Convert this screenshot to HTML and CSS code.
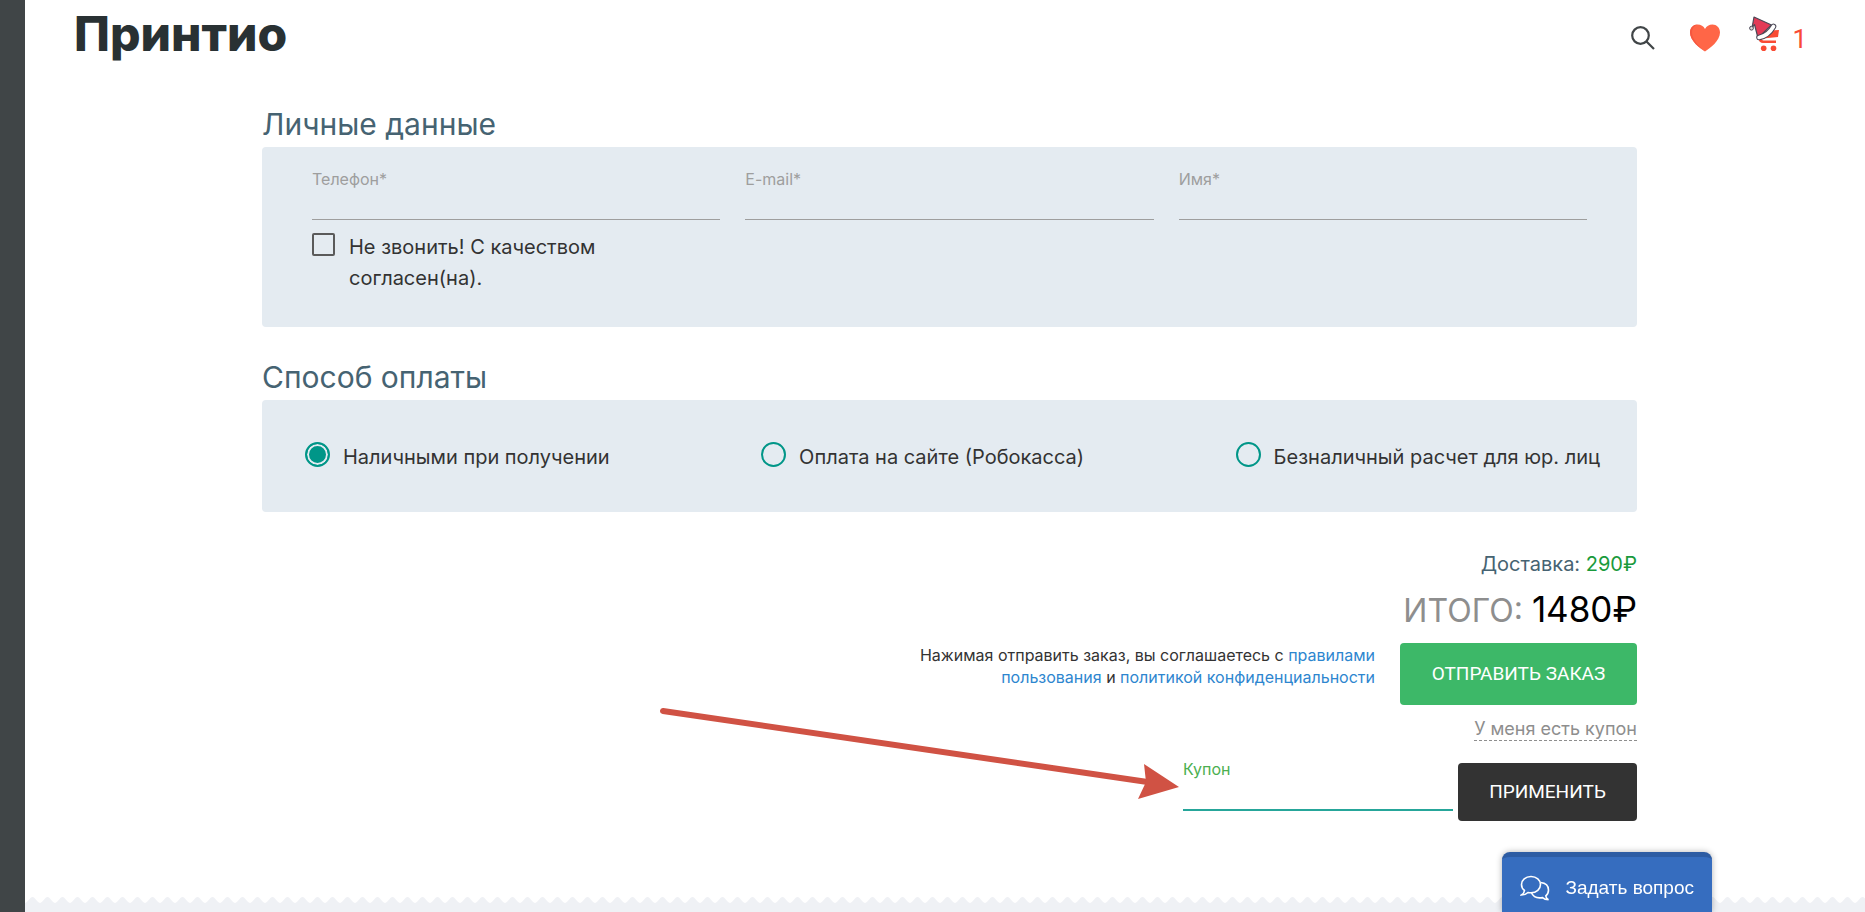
FILE: index.html
```html
<!DOCTYPE html>
<html lang="ru">
<head>
<meta charset="utf-8">
<title>Принтио — оформление заказа</title>
<link rel="stylesheet" href="styles.css">
</head>
<body>
<aside class="rail"></aside>
<div class="page">
  <header class="header">
    <a class="logo" href="#">Принтио</a>
    <nav class="tools">
      <a class="tool" href="#" aria-label="Поиск">
        <svg class="icon-search" viewBox="0 0 24 24"><circle cx="9.5" cy="9.5" r="8.3"/><path d="M15.5 15.5L23 23"/></svg>
      </a>
      <a class="tool" href="#" aria-label="Избранное">
        <svg class="icon-heart" viewBox="0 0 30 28"><path fill="#ff6647" d="M15 27.500C10 24 0 17 0 8.500C0 3.500 3.500 .5 7.500 .5C11 .5 13.500 2 15 5C16.500 2 19 .5 22.500 .5C26.500 .5 30 3.500 30 8.500C30 17 20 24 15 27.500Z"/><path fill="#f55840" d="M15 27.500C10 24 0 17 0 8.500C0 3.500 3.500 .5 7.500 .5C4 2 2 4.500 2 8.500C2 16 10 23 15 27.500Z"/></svg>
      </a>
      <a class="tool cart" href="#" aria-label="Корзина">
        <svg class="icon-cart" viewBox="0 0 31 36"><path fill="#f94b34" d="M12 15L30 14L29 21L14 22.500C12.500 23 13 24.500 14.500 24.500H27V27H14C9 26.500 9 22 12 21Z"/><circle cx="14.700" cy="32.200" r="2.800" fill="#f94b34"/><circle cx="24.500" cy="32.200" r="2.800" fill="#f94b34"/><path fill="#e33b57" stroke="#4a4856" stroke-width="1.200" stroke-linejoin="round" d="M5 1L22.500 9L9 22L5.500 8.500L3 12Z"/><path d="M10 21.500C16 20.500 21 16.500 24.500 10.500" fill="none" stroke="#4a4856" stroke-width="5.600" stroke-linecap="round"/><path d="M10 21.500C16 20.500 21 16.500 24.500 10.500" fill="none" stroke="#fff" stroke-width="3.600" stroke-linecap="round"/><circle cx="2.500" cy="12.200" r="1.900" fill="#ddd" stroke="#4a4856"/></svg>
        <span class="cart-count">1</span>
      </a>
    </nav>
  </header>

  <main class="content">
    <form class="order">
      <h2 class="title">Личные данные</h2>
      <section class="panel personal">
        <div class="field">
          <label class="field-label" for="phone">Телефон*</label>
          <input class="field-input" id="phone" type="tel">
          <div class="check">
            <input class="check-box" id="nocall" type="checkbox">
            <label class="check-label" for="nocall">Не звонить! С качеством согласен(на).</label>
          </div>
        </div>
        <div class="field">
          <label class="field-label" for="email">E-mail*</label>
          <input class="field-input" id="email" type="email">
        </div>
        <div class="field">
          <label class="field-label" for="name">Имя*</label>
          <input class="field-input" id="name" type="text">
        </div>
      </section>

      <h2 class="title">Способ оплаты</h2>
      <section class="panel payment">
        <label class="option"><input class="option-radio" type="radio" name="pay" checked><span class="option-text">Наличными при получении</span></label>
        <label class="option"><input class="option-radio" type="radio" name="pay"><span class="option-text">Оплата на сайте (Робокасса)</span></label>
        <label class="option"><input class="option-radio" type="radio" name="pay"><span class="option-text">Безналичный расчет для юр. лиц</span></label>
      </section>

      <section class="summary">
        <p class="delivery">Доставка: <span class="delivery-price">290₽</span></p>
        <p class="total">ИТОГО: <span class="total-price">1480₽</span></p>
        <div class="submit-row">
          <p class="terms">Нажимая отправить заказ, вы соглашаетесь с <a href="#">правилами пользования</a> и <a href="#">политикой конфиденциальности</a></p>
          <button class="button submit" type="button">ОТПРАВИТЬ ЗАКАЗ</button>
        </div>
        <a class="coupon-link" href="#">У меня есть купон</a>
        <div class="coupon-row">
          <div class="coupon-field">
            <label class="coupon-label" for="coupon">Купон</label>
            <input class="coupon-input" id="coupon" type="text">
            <svg class="arrow" viewBox="0 0 520 100"><path d="M4 8L492 79.500" stroke="#d05244" stroke-width="6" stroke-linecap="round"/><path d="M485 61L520 84L479 96L487 79Z" fill="#d05244"/></svg>
          </div>
          <button class="button apply" type="button">ПРИМЕНИТЬ</button>
        </div>
      </section>
    </form>
  </main>

  <footer class="footer">
    <svg class="teeth" width="100%" height="8"><defs><pattern id="tooth" width="15" height="8" patternUnits="userSpaceOnUse"><path d="M0 8V7C3 6 5 1 7.500 1S12 6 15 7V8Z" fill="#eff1f5"/></pattern></defs><rect width="100%" height="8" fill="url(#tooth)"/></svg>
  </footer>
</div>
<button class="chat" type="button">
  <svg class="icon-chat" viewBox="0 0 30 26"><path d="M11 1.500C5.500 1.500 1.500 5 1.500 9.500C1.500 12 2.500 14 4.500 15.500C4.300 17.500 3 19 1.500 20C4.500 20 6.500 19 8 17.500C9 17.700 10 17.800 11 17.800C16.500 17.800 20.500 14 20.500 9.500C20.500 5 16.500 1.500 11 1.500Z"/><path d="M20.500 7.500C25.500 8 28.500 11 28.500 15C28.500 17.500 27.500 19.500 25.800 20.800C26 22.500 27 24 28.500 24.700C26 24.700 24 24 22.500 22.600C17 23.500 13 21.500 11.500 17.800"/></svg>
  <span>Задать вопрос</span>
</button>
</body>
</html>
```

FILE: styles.css
```css
* { box-sizing: border-box; }
body {
  margin: 0;
  min-height: 100vh;
  display: flex;
  background: #fff;
  color: #333;
  font-family: Inter, "Noto Sans", sans-serif;
  font-size: 20px;
}
a { text-decoration: none; }
p, h2 { margin: 0; font-weight: 400; }
.rail { width: 25px; flex: none; background: #404547; }
.page { flex: 1; min-width: 0; display: flex; flex-direction: column; }
.header {
  display: flex;
  align-items: center;
  justify-content: space-between;
  height: 76px;
  padding: 0 58px 0 49px;
}
.logo { color: #293133; font-size: 48px; font-weight: 800; line-height: 56px; margin-bottom: 8px; }
.tools { display: flex; align-items: center; gap: 35px; }
.tool { display: flex; align-items: center; }
.icon-search { width: 24px; height: 24px; fill: none; stroke: #404547; stroke-width: 2.2; }
.icon-heart { width: 30px; height: 28px; }
.icon-cart { width: 31px; height: 36px; margin-bottom: 8px; }
.cart { gap: 12px; margin-left: -6px; }
.cart-count { color: #f94b34; font: 26px/32px Roboto, sans-serif; padding-top: 2px; }

.content { flex: 1; padding: 28px 228px 0 237px; }
.title { color: #466372; font-size: 30px; line-height: 40px; padding-bottom: 3px; }
.panel { background: #e4ebf1; border-radius: 4px; }
.personal {
  display: grid;
  grid-template-columns: repeat(3, 1fr);
  gap: 25px;
  min-height: 180px;
  margin-bottom: 30px;
  padding: 20px 50px;
}
.field { display: flex; flex-direction: column; }
.field-label { color: #9e9e9e; font-size: 16px; line-height: 24px; }
.field-input {
  width: 100%;
  height: 29px;
  border: 0;
  border-bottom: 1px solid #9e9e9e;
  background: transparent;
  outline: none;
}
.check { display: flex; gap: 14px; margin-top: 12px; }
.check-box {
  appearance: none;
  flex: none;
  width: 23px;
  height: 23px;
  margin: 1px 0 0;
  border: 2px solid #5a5a5a;
  border-radius: 2px;
}
.check-label { max-width: 280px; line-height: 31px; }
.payment {
  display: flex;
  justify-content: space-between;
  align-items: center;
  min-height: 112px;
  padding: 0 37px 3px 43px;
}
.option { display: flex; align-items: center; gap: 13px; line-height: 30px; }
.option-text { padding-top: 4px; }
.option-radio {
  appearance: none;
  width: 25px;
  height: 25px;
  margin: 0;
  border: 2px solid #009688;
  border-radius: 50%;
}
.option-radio:checked { background: #009688; box-shadow: inset 0 0 0 2px #e4ebf1; }

.summary { display: flex; flex-direction: column; align-items: flex-end; padding-top: 37px; }
.delivery { color: #466372; line-height: 30px; }
.delivery-price { color: #1a9a3c; }
.total { color: #8e8e8e; font-size: 32px; line-height: 44px; margin: 8px 0 10px; }
.total-price { color: #000; font-size: 35px; }
.submit-row { display: flex; gap: 25px; }
.terms { max-width: 480px; padding-top: 1px; font-size: 16px; line-height: 22px; text-align: right; }
.terms a { color: #2d86cf; }
.button {
  border: 0;
  border-radius: 4px;
  color: #fff;
  font: 19px/24px Roboto, sans-serif;
}
.submit { width: 237px; height: 62px; background: #3db868; }
.coupon-link { margin-top: 12px; border-bottom: 1px dashed #8e8e8e; color: #8e8e8e; font-size: 18px; line-height: 23px; }
.coupon-row { display: flex; gap: 5px; margin-top: 22px; }
.coupon-field { position: relative; width: 270px; }
.coupon-label { display: block; color: #4caf50; font-size: 16px; line-height: 12px; }
.coupon-input { display: block; width: 100%; height: 36px; border: 0; border-bottom: 2px solid #26a69a; outline: none; background: none; }
.arrow { position: absolute; right: 274px; top: -60px; width: 520px; height: 100px; fill: none; }
.apply { width: 179px; height: 58px; background: #333; }

.footer { height: 16px; display: flex; flex-direction: column; background: linear-gradient(transparent 8px, #eff1f5 8px); }
.teeth { display: block; }
.chat {
  position: fixed;
  right: 153px;
  bottom: 0;
  display: flex;
  align-items: center;
  gap: 15px;
  height: 60px;
  padding: 6px 18px 0;
  border: 0;
  border-top: 5px solid #2d5ca3;
  border-radius: 8px 8px 0 0;
  background: #366dbf;
  box-shadow: 0 0 6px rgba(0, 0, 0, .3);
  color: #fff;
  font: 19px/24px "Liberation Sans", sans-serif;
}
.icon-chat { width: 30px; height: 26px; fill: none; stroke: #fff; stroke-width: 1.6; }
```
